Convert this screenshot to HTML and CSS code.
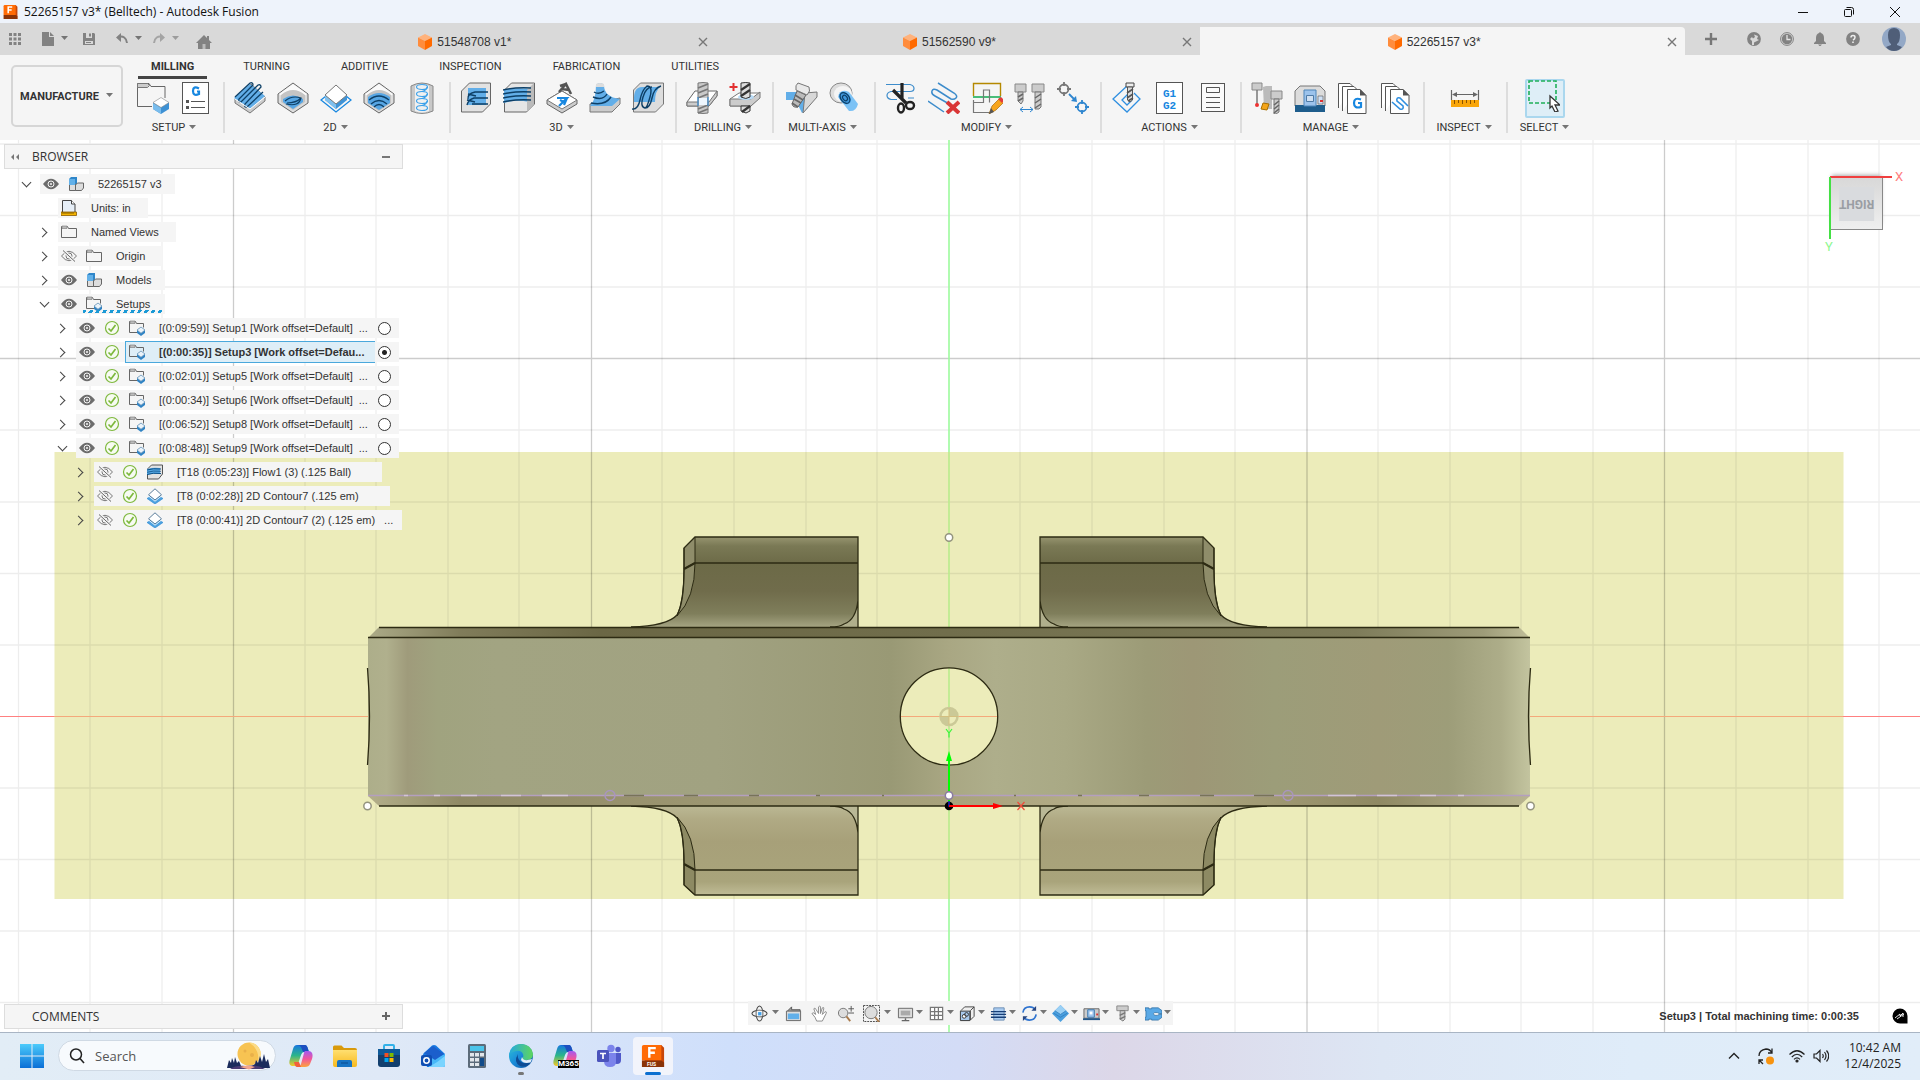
FILE: index.html
```html
<!DOCTYPE html>
<html lang="en">
<head>
<meta charset="utf-8">
<title>52265157 v3* (Belltech) - Autodesk Fusion</title>
<link rel="stylesheet" href="styles.css">
</head>
<body>
<svg class="defs" aria-hidden="true">
  <defs>
    <linearGradient id="gBlue" x2="0" y2="1"><stop offset="0" stop-color="#4ccbfb"/><stop offset="1" stop-color="#0a6fd6"/></linearGradient>
    <linearGradient id="gCopB" x2="0" y2="1"><stop offset="0" stop-color="#a35af0"/><stop offset=".5" stop-color="#f2569a"/><stop offset="1" stop-color="#fca43c"/></linearGradient>
    <linearGradient id="gCopC" x2="0" y2="1"><stop offset="0" stop-color="#1777e0"/><stop offset=".5" stop-color="#2bb58a"/><stop offset="1" stop-color="#f6c928"/></linearGradient>
    <linearGradient id="gEdge" x2="1" y2="1"><stop offset="0" stop-color="#2cc3d8"/><stop offset=".5" stop-color="#1a8ad8"/><stop offset="1" stop-color="#0d4f9e"/></linearGradient>
    <linearGradient id="gEdgeTop"><stop offset="0" stop-color="#25a8e0"/><stop offset="1" stop-color="#5fd65c"/></linearGradient>
    <linearGradient id="gFolder" x2="0" y2="1"><stop offset="0" stop-color="#ffdf70"/><stop offset="1" stop-color="#f7b91e"/></linearGradient>
  </defs>
  <symbol id="caret" viewBox="0 0 8 6"><path d="M0 0H7L3.500 4z" fill="#757575"/></symbol>
  <symbol id="cube" viewBox="0 0 14 16"><path d="M7 0l7 3.500L7 7 0 3.500z" fill="#ffb27c"/><path d="M0 3.500L7 7v9l-7-4z" fill="#ff8c3c"/><path d="M14 3.500L7 7v9l7-4z" fill="#ff6a00"/></symbol>
  <symbol id="fusion" viewBox="0 0 26 26"><path d="M4 1h18l3 3v21H4z" fill="#c8470a"/><path d="M1 3q0-2 2-2h19v17H1z" fill="#ff6b06"/><path d="M1 18h21l3 2v5H1z" fill="#8a3308"/><path d="M9 15V4.500h7M9 9.500h6" stroke="#fff" stroke-width="2.600" fill="none"/></symbol>
  <symbol id="eye" viewBox="0 0 16 16"><path d="M0 8Q8-2.500 16 8 8 18.500 0 8z" fill="#6c6c6c"/><circle cx="8" cy="8" r="3" fill="#6c6c6c" stroke="#f5f5f5"/><circle cx="8" cy="8" r="1" fill="#f5f5f5"/></symbol>
  <symbol id="eyeoff" viewBox="0 0 16 16"><path d="M.5 8Q8-1.500 15.500 8 8 17.500.5 8z" fill="none" stroke="#777"/><circle cx="8" cy="8" r="3" fill="none" stroke="#777"/><circle cx="8" cy="8" r="1" fill="#777"/><path d="M2.500 2.500l11 11" stroke="#f5f5f5" stroke-width="3"/><path d="M2 2.500l12 11" stroke="#666"/></symbol>
  <symbol id="ok" viewBox="0 0 16 16"><circle cx="8" cy="8" r="6.500" fill="#f7fbf2" stroke="#7db83c" stroke-width="1.200"/><path d="M4.500 8.500L7 11l4.500-6" fill="none" stroke="#7db83c" stroke-width="1.700"/></symbol>
  <symbol id="folder" viewBox="0 0 16 16"><path d="M.5 2.500h6l1 2h8v9H.5z" fill="#f5f5f5" stroke="#666"/><path d="M1 2h5v2.500H1z" fill="#bbb" stroke="#777" stroke-width=".6"/></symbol>
  <symbol id="setupf" viewBox="0 0 16 16"><path d="M8 12.500H.5V1.500h6l1 2h7v4" fill="none" stroke="#666"/><path d="M1 1h5v2.500H1z" fill="#bbb" stroke="#777" stroke-width=".6"/><path d="M12 7l4 3v3l-4 3-4-3v-3z" fill="#2f83c4"/><path d="M12 7l4 3-4 3.200L8 10z" fill="#eaf3fa" stroke="#6f95b4" stroke-width=".7"/></symbol>
  <symbol id="comp" viewBox="0 0 16 16"><path d="M1 3l2-2h6v7l-2 2H1z" fill="#2f86c9"/><path d="M1 3h6v7H1z" fill="#62b0e8"/><path d="M1.500 8.500h6v6h-6zM7.500 9l2-2h6v5l-2 2.500h-6z" fill="#ddd" stroke="#666"/><path d="M1 3h6v6H1z" fill="#62b0e8"/></symbol>
  <symbol id="units" viewBox="0 0 16 16"><path d="M1.500 12V.5h9l3.500 3.500v8" fill="#e6eef7" stroke="#444"/><path d="M10.500.5V4H14" fill="#fff" stroke="#444"/><path d="M0 12h15.500v3.500H0z" fill="#f4b400" stroke="#8a5a00" stroke-width=".8"/><path d="M2 12v2m2-2v2m2-2v2m2-2v2m2-2v2m2-2v2" stroke="#6b4800" stroke-width=".8"/></symbol>
  <symbol id="flow" viewBox="0 0 16 16"><path d="M.5 5l4-4h11v9l-4 5H.5z" fill="#e2e2e2" stroke="#555"/><path d="M0 5q6-2 13-1v6q-7-1-13 1z" fill="#57a9e4"/><path d="M0 6q6-2 14-1M0 10.500q6-2 14-1" stroke="#0c4f85" fill="none"/><path d="M0 8.300q6-2 14-1" stroke="#0c4f85" fill="none" stroke-width=".8"/></symbol>
  <symbol id="contour" viewBox="0 0 16 16"><path d="M8 6l8 4.500L8 16 0 10.500z" fill="#4ea2e0" stroke="#2386d2" stroke-width=".6"/><path d="M8 .8l6.500 6L8 12 1.500 6.800z" fill="#fff" stroke="#4a6f90" stroke-width=".9"/><path d="M1.500 8L8 13.200 14.500 8" fill="none" stroke="#dff0fc" stroke-width="1"/></symbol>
</svg>

<div class="app">
  <header class="title">
    <svg class="logo" viewBox="0 0 26 26"><use href="#fusion"/></svg>
    <h1>52265157 v3* (Belltech) - Autodesk Fusion</h1>
    <div class="winbtns">
      <button aria-label="Minimize"><svg viewBox="0 0 12 12"><path d="M1 6.500h10" stroke="#111"/></svg></button>
      <button aria-label="Restore"><svg viewBox="0 0 12 12" fill="none" stroke="#111"><rect x="1.500" y="3.500" width="7" height="7" rx="1"/><path d="M3.500 1.500h5q2 0 2 2v5"/></svg></button>
      <button aria-label="Close"><svg viewBox="0 0 12 12"><path d="M1 1l10 10M11 1L1 11" stroke="#111"/></svg></button>
    </div>
  </header>

  <div class="docbar">
    <div class="quick">
      <button aria-label="Data panel"><svg viewBox="0 0 16 16" width="16" height="16" fill="#828282"><path d="M2 2h3v3H2zM6.500 2h3v3h-3zM11 2h3v3h-3zM2 6.500h3v3H2zM6.500 6.500h3v3h-3zM11 6.500h3v3h-3zM2 11h3v3H2zM6.500 11h3v3h-3zM11 11h3v3h-3z"/></svg></button>
      <button aria-label="File" class="q2"><svg viewBox="0 0 16 16" width="16" height="16" fill="#828282"><path d="M2 1h7v5h5v9H2zM10 1l4 4h-4z"/></svg><svg class="car"><use href="#caret"/></svg></button>
      <button aria-label="Save" class="q3"><svg viewBox="0 0 16 16" width="16" height="16"><path d="M2 2h11l1 1v11H2z" fill="#828282"/><path d="M5 2h6v5H5zM4 10h8v3H4z" fill="#d9d9d9"/><path d="M8 2.500h2v3H8zM5 11h5v1H5z" fill="#828282"/></svg></button>
      <button aria-label="Undo" class="q2"><svg viewBox="0 0 16 16" width="16" height="16"><path d="M4 6q8-2 9 6" fill="none" stroke="#828282" stroke-width="2"/><path d="M2 6.500L7 2v9z" fill="#828282"/></svg><svg class="car"><use href="#caret"/></svg></button>
      <button aria-label="Redo" class="q2 dim"><svg viewBox="0 0 16 16" width="16" height="16"><path d="M12 6Q4 4 3 12" fill="none" stroke="#828282" stroke-width="2"/><path d="M14 6.500L9 2v9z" fill="#828282"/></svg><svg class="car"><use href="#caret"/></svg></button>
      <button aria-label="Home" class="q4"><svg viewBox="0 0 16 16" width="16" height="16"><path d="M8 1L0 9h2v6h12V9h2l-3-3V2h-2v2z" fill="#828282"/><path d="M6.500 10h3v5h-3z" fill="#bbb"/></svg></button>
    </div>
    <nav class="docs">
      <div class="doc"><button class="name"><svg><use href="#cube"/></svg>51548708 v1*</button><button class="x" aria-label="Close tab"><svg viewBox="0 0 10 10"><path d="M1 1l8 8M9 1L1 9" stroke="#777" stroke-width="1.400"/></svg></button></div>
      <div class="doc"><button class="name"><svg><use href="#cube"/></svg>51562590 v9*</button><button class="x" aria-label="Close tab"><svg viewBox="0 0 10 10"><path d="M1 1l8 8M9 1L1 9" stroke="#777" stroke-width="1.400"/></svg></button></div>
      <div class="doc on"><button class="name"><svg><use href="#cube"/></svg>52265157 v3*</button><button class="x" aria-label="Close tab"><svg viewBox="0 0 10 10"><path d="M1 1l8 8M9 1L1 9" stroke="#777" stroke-width="1.400"/></svg></button></div>
    </nav>
    <div class="tools">
      <button aria-label="New tab"><svg viewBox="0 0 14 14"><path d="M7 1v12M1 7h12" stroke="#777" stroke-width="2.400"/></svg></button>
      <button aria-label="Extensions"><svg viewBox="0 0 14 14"><circle cx="7" cy="7" r="6.900" fill="#828282"/><path d="M5 13V9L3 7l2-2 1 1.500L8 5 7 2.500l4 1.500-1 3 2 1-3 1.500-2 1V13z" fill="#d9d9d9"/></svg></button>
      <button aria-label="Job status"><svg viewBox="0 0 14 14"><circle cx="7" cy="7" r="6.400" fill="none" stroke="#828282"/><circle cx="7" cy="7" r="5.200" fill="#828282"/><path d="M7 3v4.500h3.500" stroke="#e4e4e4" stroke-width="1.300" fill="none"/></svg></button>
      <button aria-label="Notifications"><svg viewBox="0 0 14 14" fill="#828282"><path d="M7 0l1 1q3 1 3 5v3l2 2v1H1v-1l2-2V6q0-4 3-5zM5 12.500h4L7 14.500z"/></svg></button>
      <button aria-label="Help"><svg viewBox="0 0 14 14"><circle cx="7" cy="7" r="6.900" fill="#828282"/><path d="M5 5.500q0-2 2-2t2 1.700T7 8" fill="none" stroke="#eee" stroke-width="1.500"/><path d="M6.200 9.500h1.600V11H6.200z" fill="#eee"/></svg></button>
      <button aria-label="Account" class="acct"><svg viewBox="0 0 24 24"><circle cx="12" cy="12" r="12" fill="#93a8c6"/><path d="M6 8q0-7 6-7t6 7-3 9v1l5 2q-3 4-8 4t-8-4l5-2v-1Q6 15 6 8z" fill="#4f5e78"/></svg></button>
    </div>
  </div>

  <div class="ribbon">
    <button class="workspace">MANUFACTURE <svg class="car"><use href="#caret"/></svg></button>
    <div class="panel">
      <nav class="tabs">
        <button class="on">MILLING</button><button>TURNING</button><button>ADDITIVE</button><button>INSPECTION</button><button>FABRICATION</button><button>UTILITIES</button>
      </nav>
      <div class="groups">
        <section class="group">
          <div class="icons">
            <button aria-label="New setup"><svg viewBox="0 0 32 32"><path d="M15 24.500H.5V1.500H12l2 3h14V16" fill="none" stroke="#666"/><path d="M.5 1.500h10l2 2-2 2H.5z" fill="#ccc" stroke="#777"/><path d="M24 16l8 5v6l-8 5-8-5v-6z" fill="#3e91d4"/><path d="M16 21l8 5v6l-8-5z" fill="#79bcec"/><path d="M24 15.500l8 5-8 5-8-5z" fill="#fff" stroke="#888" stroke-width=".6"/></svg></button>
            <button aria-label="NC program"><svg viewBox="0 0 32 32"><rect x="2.500" y=".5" width="26" height="31" fill="#fff" stroke="#555"/><path d="M19 6.500q-6-3-6 2.500t6 3V9.500h-2" fill="none" stroke="#1787e0" stroke-width="2.200"/><path d="M6 18h3v3H6zM6 24h3v3H6z" fill="#555"/><path d="M11 19.500h14M11 25.500h14" stroke="#555" stroke-width="1.200"/></svg></button>
          </div>
          <button class="lab">SETUP <svg class="car"><use href="#caret"/></svg></button>
        </section>
        <section class="group">
          <div class="icons">
            <button aria-label="Face"><svg viewBox="0 0 32 32"><path d="M1 17L17 2l14 13v4L16 31 1 21z" fill="#ccc" stroke="#777"/><path d="M0 16L16 2l15 12-15 13z" fill="#62aee8"/><path d="M1 15L16 1q3-1 3 2L5 17q-1 4 2 3L24 3q3-1 3 2L11 22q-1 4 2 3L29 10" fill="none" stroke="#0d3f66" stroke-width="1.300"/><path d="M1 17l15 10 15-12" fill="none" stroke="#fff"/></svg></button>
            <button aria-label="2D adaptive"><svg viewBox="0 0 32 32"><path d="M16 1l15 11v9L16 31 1 21v-9z" fill="#ddd" stroke="#666"/><path d="M16 2l14 10-14 11L2 12z" fill="#fafafa"/><path d="M4 13q12-10 24 0v7l-12 8-12-8z" fill="#c4c4c4"/><path d="M6 17q10-7 20 0v3l-10 7-10-7z" fill="#57a6e4"/><path d="M8 19q7-6 16-3-2 9-15 6M10 21q9 0 14-5" fill="none" stroke="#0d3f66" stroke-width="1.200"/></svg></button>
            <button aria-label="2D contour"><svg viewBox="0 0 32 32"><path d="M16 6l15 12-15 12L1 18z" fill="none" stroke="#1787e0" stroke-width="1.300"/><path d="M5 13l11 9 11-9v5l-11 9-11-9z" fill="#3f93d6"/><path d="M5 13l11 9v5L5 18z" fill="#7fc0ee"/><path d="M16 3l11 10-11 9L5 13z" fill="#fff" stroke="#777"/></svg></button>
            <button aria-label="2D pocket"><svg viewBox="0 0 32 32"><path d="M16 1l15 11v9L16 31 1 21v-9z" fill="#ddd" stroke="#666"/><path d="M16 2l14 10-14 11L2 12z" fill="#fafafa"/><path d="M4 13q12-10 24 0v8l-12 8-12-8z" fill="#c4c4c4"/><path d="M5 15q11-8 22 0v6l-11 7-11-7z" fill="#57a6e4"/><path d="M6 18q10-8 20 0M8 22q8-7 16 0M11 25q5-5 10 0" fill="none" stroke="#0d3f66" stroke-width="1.300"/></svg></button>
            <button aria-label="Bore"><svg viewBox="0 0 32 32"><path d="M5 4q11-6 22 0v25q-11 5-22 0z" fill="#c8c8c8" stroke="#888"/><path d="M9 4q7-4 14 0v25q-7 3-14 0z" fill="#f0f0f0"/><g fill="none" stroke="#3aa0ea" stroke-width="1.200"><ellipse cx="16" cy="5" rx="5.500" ry="2.500"/><ellipse cx="16" cy="12" rx="5.500" ry="2.500"/><ellipse cx="16" cy="19" rx="5.500" ry="2.500"/><ellipse cx="16" cy="26" rx="5.500" ry="2.500"/><path d="M21 5q0 3-5 4.500M21 12q0 3-5 4.500M21 19q0 3-5 4.500"/></g></svg></button>
          </div>
          <button class="lab">2D <svg class="car"><use href="#caret"/></svg></button>
        </section>
        <section class="group">
          <div class="icons">
            <button aria-label="Adaptive clearing"><svg viewBox="0 0 32 32"><path d="M1.500 30V9l8-8h21v21l-8 8z" fill="#e2e2e2" stroke="#666"/><path d="M8 6h18v17H8z" fill="#62aee8"/><path d="M28 10H15q-8 2-7 7M28 16H14q-6 2-7 7M28 22H12M8 12l8 2M7 18l8 2" stroke="#0d3f66" stroke-width="1.400" fill="none"/></svg></button>
            <button aria-label="Parallel"><svg viewBox="0 0 32 32"><path d="M1.500 30V8l7-7h23v21l-8 8z" fill="#e6e6e6" stroke="#666"/><path d="M1 8q12-3 25-1v13q-13-3-25 1z" fill="#62aee8"/><path d="M24 8l7-7v21l-7 8z" fill="#bbb"/><path d="M0 8q13-3 28-2M0 12q13-3 28-2M0 16q13-3 28-2M0 20q13-3 28-2" stroke="#0d3f66" stroke-width="1.400" fill="none"/></svg></button>
            <button aria-label="Trace"><svg viewBox="0 0 32 32"><path d="M16 9l15 9v4l-15 9-15-9v-4z" fill="#ccc" stroke="#666"/><path d="M16 9l15 9-15 9-15-9z" fill="#fff" stroke="#777"/><path d="M13 10l7-8 5 10M20 2l-6 2M16 7l7 1" stroke="#555" stroke-width="2.600" fill="none"/><path d="M11 16l10 0-8 8M21 16l-3 7M14 18l6 3" stroke="#1787e0" stroke-width="2.200" fill="none"/></svg></button>
            <button aria-label="Contour"><svg viewBox="0 0 32 32"><path d="M1 22v8h22l8-8v-6z" fill="#ccc" stroke="#777"/><path d="M7 3q4-4 8 0 0 12 16 14l-8 7H1Q7 18 7 3z" fill="#62aee8"/><path d="M7 2q4-2 8 0v3H7z" fill="#ddd"/><path d="M5 10q5 3 10-1M4 15q10 4 14-3M2 21q14 3 20-6" stroke="#0d3f66" stroke-width="1.400" fill="none"/></svg></button>
            <button aria-label="Scallop"><svg viewBox="0 0 32 32"><path d="M1.500 30V8l7-7h23v21l-8 8z" fill="#ddd" stroke="#777"/><path d="M2 20q-1-15 8-15h18q-5 4-5 15z" fill="#62aee8"/><path d="M0 27q6 1 8-9T15 4q6 0 3 11t-5 11q-5-1-2-11T20 5M13 26q5 0 7-10t9-12" stroke="#0d3f66" stroke-width="1.400" fill="none"/></svg></button>
          </div>
          <button class="lab">3D <svg class="car"><use href="#caret"/></svg></button>
        </section>
        <section class="group">
          <div class="icons">
            <button aria-label="Drill"><svg viewBox="0 0 32 32"><path d="M1 20L9 9h22v5l-8 10H1z" fill="#fff" stroke="#666"/><path d="M1 20h22l8-11v5l-8 10H1z" fill="#ccc" stroke="#777"/><path d="M12 1q5-1 10 0v30q-5 1-10 0z" fill="#c9c9c9" stroke="#777"/><path d="M12 6l10-4M12 11l10-4M12 16l10-4M12 27l10-4M12 31l10-4" stroke="#777" stroke-width="1.800"/><path d="M12 15v9M22 15v9" stroke="#2f8fe0"/><path d="M13 16h8v7h-8z" fill="#eef6fd"/></svg></button>
            <button aria-label="Hole recognition"><svg viewBox="0 0 32 32"><path d="M1 17l9-6h20v5l-8 8H1z" fill="#fff" stroke="#777"/><path d="M1 17h21l9-7v6l-9 8H1z" fill="#ccc" stroke="#777"/><ellipse cx="17" cy="15" rx="8" ry="3" fill="#b9dbf6"/><path d="M12 1q5-1 9 0v14q-4 3-9 0zM12 24h9v5l-4 2-5-2z" fill="#ddd" stroke="#333"/><path d="M12 8l9-6M12 14l9-6M13 30l8-6" stroke="#333" stroke-width="2.200"/><path d="M4.500 1v8M.5 5h8" stroke="#e23030" stroke-width="2"/></svg></button>
          </div>
          <button class="lab">DRILLING <svg class="car"><use href="#caret"/></svg></button>
        </section>
        <section class="group multi">
          <div class="icons">
            <button aria-label="Swarf"><svg viewBox="0 0 32 32"><path d="M0 10h13v8H0zM10 19l12-9v16l-6 5z" fill="#62aee8"/><path d="M17 31l14-16v-5l-12 1z" fill="#d8d8d8" stroke="#777"/><path d="M11 9l9 4-8 12q-5 1-6-3z" fill="#bbb" stroke="#666"/><path d="M9 13l8 5M8 17l7 4M6 21l6 4" stroke="#666" stroke-width="1.600"/><path d="M12 1l11 4q2 4-2 8L10 8q-1-5 2-7z" fill="#e9e9e9" stroke="#777"/></svg></button>
            <button aria-label="Rotary"><svg viewBox="0 0 32 32"><ellipse cx="12" cy="11" rx="11" ry="10" fill="#ddd" stroke="#888"/><ellipse cx="14" cy="12" rx="9" ry="8" fill="#f4f4f4"/><path d="M9 15q2-9 11-5l9 12q-2 8-9 7z" fill="#7cc2f5"/><ellipse cx="16" cy="16" rx="7" ry="5" transform="rotate(50 16 16)" fill="#3f97dc"/><ellipse cx="16" cy="16" rx="6" ry="4" transform="rotate(50 16 16)" fill="none" stroke="#0d3f66" stroke-width="1.200"/><ellipse cx="16" cy="16" rx="3" ry="2" transform="rotate(50 16 16)" fill="none" stroke="#0d3f66" stroke-width="1.200"/></svg></button>
          </div>
          <button class="lab">MULTI-AXIS <svg class="car"><use href="#caret"/></svg></button>
        </section>
        <section class="group">
          <div class="icons">
            <button aria-label="Trim"><svg viewBox="0 0 32 32"><path d="M1 2.500h24q4 1 4 4t-4 3H6q-4 1-4 4t4 4h6M23 16h6" fill="none" stroke="#3d8ccb" stroke-width="1.200"/><path d="M17 1v16M8 8l13 13" stroke="#222" stroke-width="3.200"/><ellipse cx="16" cy="26" rx="3" ry="4.500" fill="none" stroke="#222" stroke-width="2.400"/><ellipse cx="25" cy="23.500" rx="4" ry="3.500" fill="none" stroke="#222" stroke-width="2.400"/></svg></button>
            <button aria-label="Delete passes"><svg viewBox="0 0 32 32"><path d="M10 1l16 10q4 3 2 5t-5 1L9 8Q5 6 4 9t3 5l16 9M0 19l16 11" fill="none" stroke="#3d8ccb" stroke-width="1.500"/><path d="M19 20l12 11M31 20L19 31" stroke="#d93636" stroke-width="4"/></svg></button>
            <button aria-label="Edit"><svg viewBox="0 0 32 32"><path d="M2.500 14V1.500h27V14" fill="none" stroke="#b58900" stroke-width="1.400"/><path d="M2 15h28" stroke="#1fb05a" stroke-width="1.600"/><path d="M2.500 18v12.500h18M2.500 20.500h10V8h6v12.500" fill="none" stroke="#777" stroke-width="1.200"/><path d="M18 32l3-8 8-8 4 4-8 8z" fill="#f7a51d" stroke="#a86b10" stroke-width=".7"/><path d="M27 17l3-2 3 3-2 3z" fill="#e23c3c"/><path d="M18 32l2-6 3 4z" fill="#555"/></svg></button>
            <button aria-label="Replace tool"><svg viewBox="0 0 32 32"><path d="M1 2h11v8H1zM18 2h12v8H18z" fill="#ccc" stroke="#888"/><path d="M4 10h5v9l-2 3-3-3zM21 10h6v15l-2 2h-4z" fill="#ccc" stroke="#777"/><path d="M4 15l5-3M4 19l5-3M21 16l6-4M21 21l6-4M21 26l6-4" stroke="#666" stroke-width="1.500"/><path d="M6 27.500h13M9 25l-3 2.500L9 30M16 25l3 2.500-3 2.500" fill="none" stroke="#2f86cf"/></svg></button>
            <button aria-label="Move points"><svg viewBox="0 0 32 32"><circle cx="7" cy="7" r="4.500" fill="none" stroke="#777" stroke-width="1.800"/><path d="M7 0v4M7 10v4M0 7h4M10 7h4" stroke="#777" stroke-width="1.800"/><path d="M12 12l6 6" stroke="#2f86cf" stroke-width="1.800"/><path d="M20 20l-6-1 5-5z" fill="#2f86cf"/><circle cx="25" cy="25" r="4.500" fill="none" stroke="#2f86cf" stroke-width="1.800"/><path d="M25 18v4M25 28v4M18 25h4M28 25h4" stroke="#2f86cf" stroke-width="1.800"/></svg></button>
          </div>
          <button class="lab">MODIFY <svg class="car"><use href="#caret"/></svg></button>
        </section>
        <section class="group">
          <div class="icons">
            <button aria-label="Simulate"><svg viewBox="0 0 32 32"><path d="M16 4L2 17l14 13 13-13-6-6M17 12l-6 6 5 5 5-5" fill="none" stroke="#2f8fe0" stroke-width="1.300"/><path d="M15 1h8v4h-8z" fill="#eee" stroke="#444"/><path d="M16.500 5h5v13l-2.500 2-2.500-2z" fill="#ddd" stroke="#555"/><path d="M16 11l6-4M16 16l6-4M17 19l5-3" stroke="#555" stroke-width="1.600"/></svg></button>
            <button aria-label="Post process"><svg viewBox="0 0 32 32"><rect x="2.500" y=".5" width="26" height="31" fill="#fff" stroke="#555"/><text x="15.500" y="15" class="g12">G1</text><text x="15.500" y="27" class="g12">G2</text></svg></button>
            <button aria-label="Setup sheet"><svg viewBox="0 0 32 32"><rect x="4.500" y="1.500" width="23" height="28" fill="#fafafa" stroke="#555"/><path d="M9.500 5.500h13v5h-13zM9 15.500h14M9 20.500h14M9 25.500h14" fill="none" stroke="#555"/></svg></button>
          </div>
          <button class="lab">ACTIONS <svg class="car"><use href="#caret"/></svg></button>
        </section>
        <section class="group">
          <div class="icons">
            <button aria-label="Tool library"><svg viewBox="0 0 32 32"><path d="M1 1h10v7H1z" fill="#ccc" stroke="#888"/><path d="M6 8v14" stroke="#777" stroke-width="1.500"/><circle cx="6" cy="23" r="2" fill="#e33"/><path d="M12 5l3-1h6v23h-8z" fill="#bbb"/><path d="M12 21l6 1-2 6-6-1z" fill="#f4a51a" stroke="#a97000"/><path d="M20 9h11v8H20z" fill="#ccc" stroke="#888"/><path d="M23 17h5v13l-3 2h-2z" fill="#ccc" stroke="#777"/><path d="M23 23l5-4M23 27l5-4M23 31l5-4" stroke="#666" stroke-width="1.600"/></svg></button>
            <button aria-label="Machine library"><svg viewBox="0 0 32 32"><path d="M1 9l5-5h20l5 5v15H1z" fill="#dcdcdc" stroke="#777"/><path d="M1 23h30v7H1z" fill="#1e5d8c"/><path d="M10 8h12v16H10z" fill="#9cc3ec" stroke="#4f86b9"/><path d="M12.500 13.500h7v6h-7z" fill="#cfe0f2" stroke="#4f7ba6"/><path d="M24 14h5v8h-5z" fill="#cfe0f5" stroke="#555" stroke-width=".6"/><path d="M26 18h3v2h-3z" fill="#d33"/></svg></button>
            <button aria-label="Post library"><svg viewBox="0 0 32 32"><path d="M1.500 26V1.500H13l3 3M5.500 29V4.500H17l3 3M10.500 31.500v-24H23l6 6v18z" fill="#fff" stroke="#555"/><path d="M23 7l6.500 6.500H23z" fill="#555"/><path d="M24 17.500q-7-2.500-7 3.500t7 4V21h-3" fill="none" stroke="#1787e0" stroke-width="2.200"/></svg></button>
            <button aria-label="Template library"><svg viewBox="0 0 32 32"><path d="M1.500 26V1.500H13l3 3M5.500 29V4.500H17l3 3M10.500 31.500v-24H23l6 6v18z" fill="#fff" stroke="#555"/><path d="M23 7l6.500 6.500H23z" fill="#555"/><path d="M12 20l8 7q4 1 3-3l-6-5q-1-4 3-3l8 8" fill="none" stroke="#2f8fe0" stroke-width="1.600"/></svg></button>
          </div>
          <button class="lab">MANAGE <svg class="car"><use href="#caret"/></svg></button>
        </section>
        <section class="group insp">
          <div class="icons"><button aria-label="Measure"><svg viewBox="0 0 32 32"><path d="M2.500 8v10M29.500 8v10M4 12.500h24" stroke="#666" stroke-width="1.200"/><path d="M3 12.500l5-2.500v5zM29 12.500L24 10v5z" fill="#666"/><path d="M2 18h28v7H2z" fill="#f9a60a"/><path d="M5.500 18v4m4-4v3m4-3v4m4-4v3m4-3v4m4-4v3" stroke="#8a5200"/></svg></button></div>
          <button class="lab">INSPECT <svg class="car"><use href="#caret"/></svg></button>
        </section>
        <section class="group sel">
          <div class="icons"><button aria-label="Select" class="active"><svg viewBox="0 0 32 32"><path d="M1 1h27v22H1z" fill="none" stroke="#1fb05a" stroke-width="1.600" stroke-dasharray="4 2"/><path d="M22 16l10 9h-5l3 6-3 1-3-6-2 2z" fill="#fff" stroke="#333" stroke-width="1.300"/></svg></button></div>
          <button class="lab">SELECT <svg class="car"><use href="#caret"/></svg></button>
        </section>
      </div>
    </div>
  </div>

  <main class="canvas">
    <svg class="scene" viewBox="0 140 1920 892" preserveAspectRatio="xMidYMid slice">
      <defs>
        <linearGradient id="body"><stop offset="0" stop-color="#adae8a"/><stop offset=".016" stop-color="#b0b08d"/><stop offset=".034" stop-color="#9f9b7b"/><stop offset=".06" stop-color="#a0a37f"/><stop offset=".11" stop-color="#a2a482"/><stop offset=".3" stop-color="#a1a281"/><stop offset=".45" stop-color="#999975"/><stop offset=".5" stop-color="#a9a783"/><stop offset=".54" stop-color="#aeae8b"/><stop offset=".6" stop-color="#a9a985"/><stop offset=".67" stop-color="#9c9b77"/><stop offset=".71" stop-color="#9d9776"/><stop offset=".78" stop-color="#9c9d79"/><stop offset=".87" stop-color="#9f9b78"/><stop offset=".93" stop-color="#9d9d79"/><stop offset=".975" stop-color="#adad89"/><stop offset="1" stop-color="#c3c49f"/></linearGradient>
        <linearGradient id="topc"><stop offset="0" stop-color="#acab88"/><stop offset=".08" stop-color="#807c5a"/><stop offset=".2" stop-color="#6b6745"/><stop offset=".5" stop-color="#716e4c"/><stop offset=".85" stop-color="#7e7c5a"/><stop offset=".96" stop-color="#9e9c79"/><stop offset="1" stop-color="#c0be99"/></linearGradient>
        <linearGradient id="botc"><stop offset="0" stop-color="#b3af8a"/><stop offset=".08" stop-color="#908a66"/><stop offset=".5" stop-color="#a8a27c"/><stop offset=".65" stop-color="#b6af89"/><stop offset=".87" stop-color="#8f8963"/><stop offset="1" stop-color="#b9b591"/></linearGradient>
        <linearGradient id="lugT" x2="0" y2="1"><stop offset="0" stop-color="#96946f"/><stop offset=".1" stop-color="#7a7955"/><stop offset=".3" stop-color="#6c6a47"/><stop offset=".6" stop-color="#706c4b"/><stop offset=".85" stop-color="#7f7e5b"/><stop offset="1" stop-color="#a5a482"/></linearGradient>
        <linearGradient id="lugB" x2="0" y2="1"><stop offset="0" stop-color="#bbb894"/><stop offset=".15" stop-color="#b0aa84"/><stop offset=".4" stop-color="#a7a079"/><stop offset=".85" stop-color="#a9a47b"/><stop offset="1" stop-color="#c0bc96"/></linearGradient>
        <g id="lugTop">
          <path d="M631 627Q667 626 677 615 684 603 684 569V548L695 537H858V627z" fill="url(#lugT)"/>
          <path d="M684 548L695 537V563Q695 598 677 616 684 600 684 569z" fill="#8f8d6a" stroke="#2d2b13"/>
          <path d="M858 600Q856 620 842 625L830 627H858z" fill="#b0af8c"/>
          <path d="M684 569L695 563H858M631 627Q667 626 677 615 684 603 684 569V548L695 537H858V627M858 600Q856 620 844 624 840 627 830 627" fill="none" stroke="#2d2b13" stroke-width="1.300"/>
          <path d="M684 569l11-6" stroke="#2d2b13" stroke-width="2"/>
        </g>
        <g id="lugBot">
          <path d="M631 806Q667 807 677 818 684 830 684 864V885L695 895H858V806z" fill="url(#lugB)"/>
          <path d="M684 885L695 895V870Q695 835 677 817 684 833 684 864z" fill="#8d8a63" stroke="#2d2b13"/>
          <path d="M858 833Q856 813 842 808L830 806H858z" fill="#b9b896"/>
          <path d="M684 864L695 870H858M631 806Q667 807 677 818 684 830 684 864V885L695 895H858V806M858 833Q856 813 844 809 840 806 830 806" fill="none" stroke="#2d2b13" stroke-width="1.300"/>
          <path d="M684 864l11 6" stroke="#2d2b13" stroke-width="2"/>
        </g>
      </defs>
      <rect y="140" width="1920" height="892" fill="#fff"/>
      <rect x="54.500" y="452" width="1789" height="447" fill="#ececba"/>
      <path class="minor" d="M18.500 140v892M90 140v892M162 140v892M305 140v892M376 140v892M448 140v892M519 140v892M662 140v892M734 140v892M806 140v892M877 140v892M1020 140v892M1092 140v892M1164 140v892M1235 140v892M1378 140v892M1450 140v892M1521 140v892M1593 140v892M1736 140v892M1808 140v892M1879 140v892M0 144h1920M0 215.500h1920M0 287h1920M0 430h1920M0 502h1920M0 573.500h1920M0 645h1920M0 788h1920M0 859.500h1920M0 931h1920M0 1002.500h1920"/>
      <path class="major" d="M233.500 140v892M591.500 140v892M1307 140v892M1664.500 140v892M0 358.500h1920"/>
      <path d="M0 716.500h54M1843 716.500h77" stroke="#ff8080" stroke-width="1.200"/>
      <path d="M54 716.500h1789" stroke="#f4a97b" stroke-width="1.200"/>
      <path d="M949 140v312M949 899v133" stroke="#9dfb9d" stroke-width="1.600"/>
      <path d="M949 452v447" stroke="#b9ec8c" stroke-width="1.600"/>
      <use href="#lugTop"/><use href="#lugTop" transform="translate(1898) scale(-1 1)"/>
      <use href="#lugBot"/><use href="#lugBot" transform="translate(1898) scale(-1 1)"/>
      <path d="M368 638H1530V796H368zM949 668a49 49 0 1 0 .1 0z" fill="url(#body)" fill-rule="evenodd"/>
      <path d="M379 627H1519L1530 638H368z" fill="url(#topc)"/>
      <path d="M368 796H1530L1519 806H379z" fill="url(#botc)"/>
      <path d="M379 627.500H1519M368 637.500H1530M379 806H1519" stroke="#2d2b13" stroke-width="1.600"/>
      <circle cx="949" cy="716.500" r="48.700" fill="none" stroke="#2d2b13" stroke-width="1.300"/>
      <path d="M367.500 668q4 48 0 97M1530.500 668q-4 48 0 97" fill="none" stroke="#2d2b13" stroke-width="1.300"/>
      <path d="M368 795.500H1530" stroke="#b49fbf" stroke-width="1.500"/>
      <path d="M624 795.500h20M684 795.500h14M749 795.500h10M816 795.500h4M882 795.500h2M1014 795.500h2M1078 795.500h4M1139 795.500h10M1200 795.500h14M1254 795.500h20" stroke="#77735a" stroke-width="1.500"/>
      <path d="M404 795.500h4M434 795.500h6M461 795.500h16M501 795.500h20M542 795.500h26M1328 795.500h28M1377 795.500h20M1420 795.500h16M1458 795.500h6" stroke="#d2c4d8" stroke-width="1.500"/>
      <g fill="none" stroke="#a995bd" stroke-width="1.400"><circle cx="610" cy="795.500" r="5"/><circle cx="1288" cy="795.500" r="5"/></g>
      <circle cx="949" cy="716.500" r="8.500" fill="#ececba" stroke="#cbc997" stroke-width="2.500"/><path d="M949 708v17a8.500 8.500 0 0 1-8.500-8.500h17A8.500 8.500 0 0 0 949 708z" fill="#cbc997"/><path d="M949 708v17M940 716.500h18" stroke="#d3bf80"/>
      <path d="M949 806V756" stroke="#0f0" stroke-width="2"/><path d="M949 751l3 10h-6z" fill="#0f0"/>
      <circle cx="949" cy="806" r="4.300" fill="#000"/><path d="M949 801v5h4" stroke="#2020c0" stroke-width="1.500" fill="none"/>
      <path d="M949 806h48" stroke="#f00" stroke-width="2"/><path d="M1003 806l-10-3v6z" fill="#f00"/>
      <g fill="#fff" stroke="#94947e" stroke-width="1.500"><circle cx="949" cy="537.500" r="3.700"/><circle cx="367.500" cy="806" r="3.700"/><circle cx="1530.500" cy="806" r="3.700"/></g>
      <circle cx="949" cy="795.500" r="3.700" fill="#fff" stroke="#8a7ba0" stroke-width="1.500"/>
      <path d="M946 729l3 4 3-4M949 733v4.500" fill="none" stroke="#3cf53c" stroke-width="1.200"/>
      <path d="M1017.500 802l7 8M1024.500 802l-7 8" stroke="#f04a3a" stroke-width="1.200"/>
    </svg>

    <div class="cubebox">
      <div class="face"><span>RIGHT</span></div>
      <i class="ax"></i><i class="ay"></i><b class="lx">X</b><b class="ly">Y</b>
    </div>

    <aside class="browser">
      <div class="bar"><span class="chev"><svg viewBox="0 0 10 8" width="10" height="8"><path d="M4 1v6L1 4zM9 1v6L6 4z" fill="#777"/></svg></span><h2>BROWSER</h2><button aria-label="Collapse"><svg viewBox="0 0 10 10" width="10" height="10"><path d="M1 5h8" stroke="#777" stroke-width="2"/></svg></button></div>
      <ul class="tree">
        <li class="l0 open"><button class="exp" aria-label="Collapse"></button><div class="it w135"><svg><use href="#eye"/></svg><svg><use href="#comp"/></svg><span class="t">52265157 v3</span></div></li>
        <li class="l1"><span class="exp none"></span><div class="it w90"><svg><use href="#units"/></svg><span class="t">Units: in</span></div></li>
        <li class="l1"><button class="exp" aria-label="Expand"></button><div class="it w118"><svg><use href="#folder"/></svg><span class="t">Named Views</span></div></li>
        <li class="l1"><button class="exp" aria-label="Expand"></button><div class="it w104"><svg><use href="#eyeoff"/></svg><svg><use href="#folder"/></svg><span class="t">Origin</span></div></li>
        <li class="l1"><button class="exp" aria-label="Expand"></button><div class="it w107"><svg><use href="#eye"/></svg><svg><use href="#comp"/></svg><span class="t">Models</span></div></li>
        <li class="l1 open"><button class="exp" aria-label="Collapse"></button><div class="it w107 busy"><svg><use href="#eye"/></svg><svg><use href="#setupf"/></svg><span class="t">Setups</span></div></li>
        <li class="l2"><button class="exp" aria-label="Expand"></button><div class="it w323"><svg><use href="#eye"/></svg><svg><use href="#ok"/></svg><label class="pick" for="s1"><svg><use href="#setupf"/></svg><span class="t">[(0:09:59)] Setup1 [Work offset=Default]</span><span class="dots">...</span></label><input type="radio" name="setup" id="s1"></div></li>
        <li class="l2 cur"><button class="exp" aria-label="Expand"></button><div class="it w323"><svg><use href="#eye"/></svg><svg><use href="#ok"/></svg><label class="pick" for="s3"><svg><use href="#setupf"/></svg><span class="t">[(0:00:35)] Setup3 [Work offset=Defau...</span></label><input type="radio" name="setup" id="s3" checked></div></li>
        <li class="l2"><button class="exp" aria-label="Expand"></button><div class="it w323"><svg><use href="#eye"/></svg><svg><use href="#ok"/></svg><label class="pick" for="s5"><svg><use href="#setupf"/></svg><span class="t">[(0:02:01)] Setup5 [Work offset=Default]</span><span class="dots">...</span></label><input type="radio" name="setup" id="s5"></div></li>
        <li class="l2"><button class="exp" aria-label="Expand"></button><div class="it w323"><svg><use href="#eye"/></svg><svg><use href="#ok"/></svg><label class="pick" for="s6"><svg><use href="#setupf"/></svg><span class="t">[(0:00:34)] Setup6 [Work offset=Default]</span><span class="dots">...</span></label><input type="radio" name="setup" id="s6"></div></li>
        <li class="l2"><button class="exp" aria-label="Expand"></button><div class="it w323"><svg><use href="#eye"/></svg><svg><use href="#ok"/></svg><label class="pick" for="s8"><svg><use href="#setupf"/></svg><span class="t">[(0:06:52)] Setup8 [Work offset=Default]</span><span class="dots">...</span></label><input type="radio" name="setup" id="s8"></div></li>
        <li class="l2 open"><button class="exp" aria-label="Collapse"></button><div class="it w323"><svg><use href="#eye"/></svg><svg><use href="#ok"/></svg><label class="pick" for="s9"><svg><use href="#setupf"/></svg><span class="t">[(0:08:48)] Setup9 [Work offset=Default]</span><span class="dots">...</span></label><input type="radio" name="setup" id="s9"></div></li>
        <li class="l3"><button class="exp" aria-label="Expand"></button><div class="it w288"><svg><use href="#eyeoff"/></svg><svg><use href="#ok"/></svg><svg><use href="#flow"/></svg><span class="t">[T18 (0:05:23)] Flow1 (3) (.125 Ball)</span></div></li>
        <li class="l3"><button class="exp" aria-label="Expand"></button><div class="it w296"><svg><use href="#eyeoff"/></svg><svg><use href="#ok"/></svg><svg><use href="#contour"/></svg><span class="t">[T8 (0:02:28)] 2D Contour7 (.125 em)</span></div></li>
        <li class="l3"><button class="exp" aria-label="Expand"></button><div class="it w308"><svg><use href="#eyeoff"/></svg><svg><use href="#ok"/></svg><svg><use href="#contour"/></svg><span class="t">[T8 (0:00:41)] 2D Contour7 (2) (.125 em)</span><span class="dots">...</span></div></li>
      </ul>
    </aside>

    <footer class="foot">
      <div class="bar comments"><h2>COMMENTS</h2><button aria-label="Add comment"><svg viewBox="0 0 10 10" width="10" height="10"><path d="M5 1v8M1 5h8" stroke="#666" stroke-width="2"/></svg></button></div>
      <div class="navbar">
        <button class="w" aria-label="Orbit"><svg viewBox="0 0 18 18"><ellipse cx="9" cy="9" rx="8" ry="3.500" fill="none" stroke="#444" stroke-width="1.100"/><ellipse cx="9" cy="9" rx="3.500" ry="8" fill="none" stroke="#444" stroke-width="1.100"/><path d="M6 6h6v6H6z" fill="#f4f4f4"/><path d="M7.500 7.500h3.500V11H7.500z" fill="#3fa0ec"/></svg><svg class="car"><use href="#caret"/></svg></button>
        <button aria-label="Look at"><svg viewBox="0 0 18 18"><path d="M2 7L7 2v3h9v3" fill="#999" stroke="#555"/><path d="M1.500 6.500h15v10h-15z" fill="#ddd" stroke="#666"/><path d="M3 9h12v6H3z" fill="#62b0ea"/></svg></button>
        <button aria-label="Pan"><svg viewBox="0 0 18 18"><path d="M6 17Q5 13 1 9q1-2 4 1L3 4q1-2 2.500 1L8 9V2q1.500-2 2 0v7l2-6q2-1 1.500 1L12 10l3-3q2 0 1 2l-4 8z" fill="#fff" stroke="#888"/></svg></button>
        <button aria-label="Zoom"><svg viewBox="0 0 18 18"><circle cx="6.500" cy="8.500" r="5" fill="#ddd" stroke="#777"/><path d="M10 12l4 5" stroke="#a87a4c" stroke-width="2"/><path d="M12 4h6M15 1v6M12 8.500h6" stroke="#555"/></svg></button>
        <button class="w" aria-label="Fit"><svg viewBox="0 0 18 18"><path d="M.5.5h17v17H.5z" fill="none" stroke="#444" stroke-dasharray="2 1"/><circle cx="8.500" cy="8" r="6.500" fill="#ddd" stroke="#777"/><path d="M13 13l4 5" stroke="#a87a4c" stroke-width="2"/></svg><svg class="car"><use href="#caret"/></svg></button>
        <button class="w2" aria-label="Display settings"><svg viewBox="0 0 18 18"><path d="M1.500 3.500h15v10h-15z" fill="#ddd" stroke="#666"/><path d="M4 6h10v5H4z" fill="#aaa"/><path d="M9 14v2M5 16.500h8" stroke="#666" stroke-width="1.500"/></svg><svg class="car"><use href="#caret"/></svg></button>
        <button class="w2" aria-label="Grid"><svg viewBox="0 0 18 18"><path d="M2.500 2.500h13v13h-13zM2.500 7h13M2.500 11h13M7 2.500v13M11 2.500v13" fill="#fff" stroke="#777" stroke-width="1.300"/></svg><svg class="car"><use href="#caret"/></svg></button>
        <button class="w2" aria-label="Viewports"><svg viewBox="0 0 18 18"><path d="M2 6l4-4h10v10l-4 4M12 6l4-4M12 6v10" fill="#eee" stroke="#444"/><path d="M1.500 6.500h10v10h-10z" fill="#a9c9ec" stroke="#333"/><circle cx="5.500" cy="12" r="2" fill="#fff" stroke="#333"/><circle cx="8" cy="10" r="2" fill="none" stroke="#333"/></svg><svg class="car"><use href="#caret"/></svg></button>
        <button class="w2" aria-label="Toolpath"><svg viewBox="0 0 18 18"><path d="M4 3h11v13H4z" fill="#a9cbf0" stroke="#6f8fb5"/><path d="M1 7h16M1 10h16M1 13h16" stroke="#173f78" stroke-width="1.400"/></svg><svg class="car"><use href="#caret"/></svg></button>
        <button class="w2" aria-label="Regenerate"><svg viewBox="0 0 18 18"><path d="M2 8q1-6 7-6 4 0 6 3M16 10q-1 6-7 6-4 0-6-3" fill="none" stroke="#2f74d0" stroke-width="1.700"/><path d="M16 1v5h-5zM2 17v-5h5z" fill="#2a4780"/></svg><svg class="car"><use href="#caret"/></svg></button>
        <button class="w2" aria-label="Stock"><svg viewBox="0 0 18 18"><path d="M9 0l9 9-9 9-9-9z" fill="#4b9fdf"/><path d="M9 0l6 6-6 4-6-4z" fill="#9bd0f5"/><path d="M3 6l6 4 6-4M1.500 8.500L9 13l7.500-4.500" fill="none" stroke="#2d7cba" stroke-width=".8"/></svg><svg class="car"><use href="#caret"/></svg></button>
        <button class="w2" aria-label="Machine"><svg viewBox="0 0 18 18"><path d="M1 4h16v10H1z" fill="#ccc" stroke="#666"/><path d="M0 14h18v2H0z" fill="#24588a"/><path d="M5 5h7v8H5z" fill="#9fc6ef" stroke="#3d78ad"/><path d="M7 7h3v3H7z" fill="#fff"/><path d="M14 9h2v2h-2z" fill="#d33"/></svg><svg class="car"><use href="#caret"/></svg></button>
        <button class="w2" aria-label="Tool"><svg viewBox="0 0 18 18"><path d="M3 1h12v5H3z" fill="#ccc" stroke="#888"/><path d="M6.500 6h5v9l-2 2-3-2z" fill="#ccc" stroke="#777"/><path d="M6 11l6-3M6 15l6-3" stroke="#777" stroke-width="1.500"/></svg><svg class="car"><use href="#caret"/></svg></button>
        <button class="w2" aria-label="Fixture"><svg viewBox="0 0 18 18"><path d="M0 3h4v1h3V3h7l4 3v3h-3l-2-1h-3q-2 1 0 3h3l2-1h3v3l-4 3H7v-1H4v1H0v-3h1V6H0z" fill="#5aa9e6" stroke="#2f6fa5" stroke-width=".8"/></svg><svg class="car"><use href="#caret"/></svg></button>
      </div>
      <div class="status"><span>Setup3 | Total machining time: 0:00:35</span><button aria-label="Assistant"><svg viewBox="0 0 16 16"><path d="M8 .5A7.500 7.500 0 0 1 15.500 8v7.500H8A7.500 7.500 0 0 1 8 .5z" fill="#000"/><path d="M3 10l5-4v2l3-3v4M5 11l7-5" stroke="#fff" stroke-width=".9" fill="none"/></svg></button></div>
    </footer>
  </main>

  <footer class="taskbar">
    <button class="start" aria-label="Start"><svg viewBox="0 0 24 24" width="24" height="24" fill="url(#gBlue)"><path d="M0 0h11.500v11.500H0zM12.500 0H24v11.500H12.500zM0 12.500h11.500V24H0zM12.500 12.500H24V24H12.500z"/></svg></button>
    <div class="search">
      <svg viewBox="0 0 16 16" width="16" height="16"><circle cx="7" cy="6.500" r="5.500" fill="none" stroke="#222" stroke-width="1.500"/><path d="M11 10.500l4 4.500" stroke="#222" stroke-width="1.600"/></svg>
      <input type="text" placeholder="Search" aria-label="Search">
      <svg viewBox="0 0 44 28" width="44" height="28"><circle cx="22" cy="12" r="11.500" fill="#f7c352"/><path d="M22 .5a11.500 11.500 0 0 1 9 19q2-12-9-19z" fill="#fbdb87"/><circle cx="18" cy="9" r="1.500" fill="#e9b04a"/><circle cx="25" cy="13" r="2" fill="#e9b04a"/><path d="M0 26l2-8 2 3 1-5 2 5 1-6 2 6 2-2 2 5q8 3 14-2l1-4 2 3 2-7 2 6 2-8 2 8 2-3 2 9z" fill="#1b2c5c"/><path d="M3 27q6-4 16-3 10-2 19 3z" fill="#4a3c74"/><path d="M13 25q8-3 15 0l-6 2.500z" fill="#f3a58c"/></svg>
    </div>
    <button aria-label="Copilot"><svg viewBox="0 0 24 24"><use href="#cp"/></svg></button>
    <button aria-label="File Explorer"><svg viewBox="0 0 24 24"><path d="M0 3q0-1.500 1.500-1.500h7L11 4h11q2 0 2 2v4H0z" fill="#d99a0b"/><path d="M0 6h24v15q0 2-2 2H2q-2 0-2-2z" fill="url(#gFolder)"/><path d="M4 23v-5q0-2 2-2h11q2 0 2 2v5z" fill="#1673c4"/><path d="M8 19h7" stroke="#0b4c8f"/></svg></button>
    <button aria-label="Store"><svg viewBox="0 0 24 24"><path d="M7 6V2q0-1 1-1h8q1 0 1 1v4" fill="none" stroke="#33b1e8" stroke-width="2"/><path d="M1 5h22v15q0 3-3 3H4q-3 0-3-3z" fill="#123f6e"/><path d="M1 5h22v6H1z" fill="#0e5a99"/><path d="M7.500 9h4v4h-4z" fill="#f25022"/><path d="M12.500 9h4v4h-4z" fill="#7fba00"/><path d="M7.500 14h4v4h-4z" fill="#00a4ef"/><path d="M12.500 14h4v4h-4z" fill="#ffb900"/></svg></button>
    <button aria-label="Outlook"><svg viewBox="0 0 24 24"><path d="M2 10L11 1.500q2-1 4 0L24 10v11q0 2-2 2H6z" fill="#1678e2"/><path d="M6 8l9 6 9-4v11q0 2-2 2H8z" fill="#48b8f8"/><path d="M3 9l9-7 11 8-9 6z" fill="#1b5fcc"/><path d="M8 23q9-5 16-11v9q0 2-2 2z" fill="#7ad4ff"/><rect y="11" width="11" height="11" rx="2" fill="#0f4fb4"/><circle cx="5.500" cy="16.500" r="2.700" fill="none" stroke="#fff" stroke-width="1.500"/></svg></button>
    <button aria-label="Calculator"><svg viewBox="0 0 24 24"><rect x="3" width="18" height="24" rx="1.500" fill="#5c6b7a"/><path d="M5 2h14v5H5z" fill="#4bc4ea"/><path d="M5 9h4v3.500H5zM10 9h4v3.500h-4zM15 9h4v3.500h-4zM5 14h4v3.500H5zM10 14h4v3.500h-4zM5 19h4v3H5zM10 19h4v3h-4z" fill="#e2e6ea"/><path d="M15 14h4v8h-4z" fill="#114b8a"/></svg></button>
    <button aria-label="Edge" class="run"><svg viewBox="0 0 24 24"><circle cx="12" cy="12" r="12" fill="url(#gEdge)"/><path d="M0 11Q2 0 12 0t12 10q0 6-7 6-4 0-4-2 2-1 1-4-2-4-7-3T0 11z" fill="url(#gEdgeTop)"/><path d="M9 10q-5 8 2 12 7 2 11-4-8 3-11-1-3-3-2-7z" fill="#0e4c95"/><path d="M13 13q1 5 10 2l-1.500 3.500Q14 20 12 16z" fill="#e3edf8"/></svg></button>
    <button aria-label="Microsoft 365"><svg viewBox="0 0 24 24"><g id="cp"><path d="M8 1h8q2 0 3 4l1 3h-5q-2 0-3 3l-3 9q-1 2-3 2H3q-4-1-2-7L4 5q1-4 4-4z" fill="url(#gCopC)"/><path d="M8 1h8q2 0 3 4l1 3h-6L12 3q-1-2-4-2z" fill="#1c4fc0"/><path d="M16 7h4q5 1 3 8l-2 5q-1 3-5 3H8q3 0 4-3l3-11q.5-2 1-2z" fill="url(#gCopB)"/><path d="M5 18h5l2 5H8q-2 0-3-5z" fill="#f2603c"/></g></svg><span class="badge">M365</span></button>
    <button aria-label="Teams"><svg viewBox="0 0 24 24"><circle cx="14" cy="4.500" r="3.700" fill="#7b83eb"/><circle cx="21" cy="5.500" r="2.700" fill="#5059c9"/><path d="M17 9h7v7q0 4-4 4-2 0-3-1z" fill="#5059c9"/><path d="M7 9h12v9q0 5-6 5-6 0-6-6z" fill="#7b83eb"/><rect y="6" width="12" height="12" rx="1.500" fill="#4b53bc"/><path d="M3 9.500h6M6 9.500V15" stroke="#fff" stroke-width="1.700"/></svg></button>
    <button aria-label="Autodesk Fusion" class="cur"><svg viewBox="0 0 26 26"><use href="#fusion"/></svg><span class="fus">FUS</span></button>
    <div class="tray">
      <button aria-label="Show hidden icons"><svg viewBox="0 0 12 12" width="12" height="12"><path d="M1 8.500L6 3.500l5 5" fill="none" stroke="#222" stroke-width="1.400"/></svg></button>
      <button aria-label="Updates" class="upd"><svg viewBox="0 0 18 18" width="18" height="18"><path d="M2 9q0-6 7-7 4 0 6 4M15 1.500V6h-4M2 17v-4h4M2.500 13.500L6 17" fill="none" stroke="#222" stroke-width="1.300"/><circle cx="13" cy="13.500" r="4" fill="#f7930f"/></svg></button>
      <button aria-label="Network"><svg viewBox="0 0 16 14" width="16" height="14" fill="none" stroke="#222" stroke-width="1.200"><path d="M.5 5.500Q8-2 15.500 5.500M2.800 8Q8 2.500 13.200 8M5 10.300q3-3 6 0"/><circle cx="8" cy="12" r="1" fill="#222"/></svg></button>
      <button aria-label="Volume"><svg viewBox="0 0 16 14" width="16" height="14" fill="none" stroke="#222" stroke-width="1.200"><path d="M1 5h2.500L7 1.500v11L3.500 9H1zM9.500 5q1.500 2 0 4M11.500 3q3 4 0 8M13.500 1.500q4.500 5.500 0 11"/></svg></button>
      <div class="clock"><time>10:42 AM</time><time>12/4/2025</time></div>
    </div>
  </footer>
</div>
</body>
</html>
```
FILE: styles.css
```css
* { box-sizing: border-box; }
body { margin: 0; font-family: "Liberation Sans", Arial, sans-serif; color: #333; }
button { border: 0; background: none; padding: 0; margin: 0; font: inherit; color: inherit; display: flex; align-items: center; justify-content: center; }
h1, h2, ul { margin: 0; padding: 0; font-weight: 400; }
svg { display: block; flex: none; }
.defs { position: absolute; width: 0; height: 0; }
.car { width: 8px; height: 6px; }
.app { display: flex; flex-direction: column; height: 100vh; overflow: hidden; }

/* Title bar */
.title { flex: none; height: 23px; display: flex; align-items: center; gap: 6px; padding-left: 3px; background: #eef3fb; }
.logo { width: 15px; height: 16px; }
.title h1 { flex: 1; font: 12px "Open Sans", sans-serif; color: #111; }
.winbtns { display: flex; }
.winbtns button { width: 46px; height: 20px; }
.winbtns svg { width: 12px; height: 12px; }
.winbtns button:last-child { margin-right: 2px; }

/* Document tabs */
.docbar { flex: none; height: 32px; display: flex; background: #d9d9d9; }
.quick { width: 231px; display: flex; align-items: center; padding-left: 7px; }
.quick .q2 { margin-left: 16px; gap: 5px; width: 30px; }
.quick .q2.dim { margin-left: 7px; opacity: .6; }
.quick .q3 { margin-left: 12px; }
.quick .q4 { margin-left: 16px; padding-top: 6px; }
.docs { flex: 1; display: flex; }
.doc { flex: 1; display: flex; align-items: center; padding: 1px 5px 0 0; margin-top: 4px; height: 28px; }
.doc.on { background: #f5f5f5; border-radius: 0 4px 0 0; }
.doc .name { flex: 1; gap: 5px; font-size: 12px; padding-left: 4px; }
.doc .name svg { width: 14px; height: 16px; }
.doc .x { width: 16px; height: 16px; }
.doc .x svg { width: 10px; height: 10px; }
.tools { width: 235px; display: flex; align-items: center; padding-left: 10px; }
.tools button { width: 33px; }
.tools button:first-child { width: 32px; margin-right: 10px; }
.tools svg { width: 14px; height: 14px; }
.tools .acct { width: 50px; }
.tools .acct svg { width: 24px; height: 24px; }

/* Ribbon */
.ribbon { flex: none; height: 85px; display: flex; background: #f5f5f5; font: 11px Roboto, sans-serif; }
.workspace { width: 112px; height: 62px; margin: 10px 3px 0 11px; border: 2px solid #d6d6d6; border-radius: 5px; font-weight: 700; gap: 7px; }
.panel { flex: 1; min-width: 0; }
.tabs { display: flex; height: 24px; }
.tabs button { padding: 0 25px 0 26px; position: relative; line-height: 23px; align-items: flex-start; }
.tabs .on { font-weight: 700; padding: 0 23px 0 25px; }
.tabs .on::after { content: ""; position: absolute; left: 12px; right: 10px; bottom: 0; height: 3px; background: #444; }
.groups { display: flex; padding-top: 3px; }
.group { height: 51px; padding: 0 11px; border-right: 2px solid #ddd; display: flex; flex-direction: column; align-items: center; justify-content: space-between; margin-right: -2px; }
.icons { display: flex; gap: 11px; height: 32px; align-items: center; }
.icons svg { width: 32px; height: 32px; }
.group .lab { gap: 4px; line-height: 14px; height: 11px; white-space: nowrap; }
.multi { width: 104px; }
.insp { width: 85px; }
.sel { width: 78px; border-right: 0; }
.icons .active { width: 40px; height: 39px; flex: none; background: #deeef7; border: 2px solid #aad7ee; border-radius: 2px; }
.active svg { margin: -4px 0 0 -2px; }
.g12 { font: 700 11px "Liberation Mono", monospace; fill: #1787e0; text-anchor: middle; }

/* Canvas */
.canvas { flex: 1; min-height: 0; position: relative; display: flex; flex-direction: column; justify-content: space-between; background: #fff; }
.scene { position: absolute; left: 0; top: 0; width: 100%; height: 100%; }
.minor { stroke: #000; stroke-opacity: .07; stroke-width: 1.3; }
.major { stroke: #000; stroke-opacity: .2; stroke-width: 1.3; }
.bar { width: 399px; height: 25px; display: flex; align-items: center; background: #f5f5f5; border: 1px solid #ddd; margin-left: 4px; padding: 0 11px 0 5px; }
.bar h2 { flex: 1; font: 12px "Open Sans", sans-serif; }
.bar .chev { width: 22px; }
.comments { padding-left: 27px; }
.browser { position: relative; padding-top: 4px; align-self: flex-start; }
.tree { list-style: none; font-size: 11px; padding-top: 3px; }
.tree li { display: flex; align-items: center; height: 24px; }
.l0 { padding-left: 12px; }
.l1 { padding-left: 30px; }
.l2 { padding-left: 48px; }
.l3 { padding-left: 66px; }
.exp { width: 28px; height: 20px; padding-right: 4px; }
.exp::before { content: ""; width: 6px; height: 6px; border: solid #444; border-width: 1px 1px 0 0; transform: rotate(45deg); }
.open .exp { padding: 0 0 4px; }
.open .exp::before { transform: rotate(135deg); }
.exp.none::before { content: none; }
.it { height: 20px; display: flex; align-items: center; gap: 9px; padding-left: 3px; background: #f5f5f5; position: relative; }
.it svg { width: 16px; height: 16px; }
.it .t { margin-left: 5px; white-space: nowrap; }
.dots { margin-left: auto; padding-right: 10px; }
.pick { width: 250px; height: 20px; margin-left: -4px; padding-left: 4px; display: flex; align-items: center; gap: 9px; }
.cur .pick { height: 22px; background: #deeef7; border: 1px solid #4aa8dc; border-right: 0; padding-left: 3px; font-weight: 700; }
.pick .dots { margin-left: -3px; padding: 0; }
.it input { appearance: none; width: 13px; height: 13px; margin: 0 0 0 -6px; border: 1px solid #333; border-radius: 50%; background: #fff; }
.it input:checked { background: radial-gradient(circle, #222 0 2px, #fff 3px); }
.w90 { width: 90px; }
.w104 { width: 104px; }
.w107 { width: 107px; }
.w118 { width: 118px; }
.w135 { width: 135px; }
.w288 { width: 288px; }
.w296 { width: 296px; }
.w308 { width: 308px; }
.w323 { width: 323px; }
.busy::after { content: ""; position: absolute; left: 25px; right: 0; bottom: 1px; height: 3px; background: repeating-linear-gradient(120deg, #1b9ad6 0 3px, transparent 3px 6px); }

/* View cube */
.cubebox { position: absolute; right: 37px; top: 37px; width: 53px; height: 53px; }
.face { width: 53px; height: 53px; border: 1px solid #888; background: linear-gradient(#d8d8d8, #efefef); display: flex; align-items: center; justify-content: center; box-shadow: 0 -4px 4px -2px #aaa; }
.face span { font: 700 12px/34px Roboto, sans-serif; color: #999da3; background: #d9dbde; transform: rotate(180deg); }
.ax { position: absolute; left: 0; top: -1px; width: 62px; height: 2px; background: #f04040; }
.ay { position: absolute; left: -1px; top: 0; width: 2px; height: 62px; background: #44e044; }
.lx, .ly { position: absolute; font: 13px Roboto, sans-serif; }
.lx { left: 65px; top: -8px; color: #ff8080; }
.ly { left: -5px; top: 62px; color: #90f890; }

/* Canvas footer */
.foot { position: relative; display: grid; grid-template-columns: 1fr auto 1fr; align-items: center; height: 30px; margin-bottom: 1px; }
.navbar { display: flex; align-items: center; height: 24px; margin-bottom: 6px; background: #f4f4f4; padding: 0 0 0 3px; }
.navbar button { width: 26px; justify-content: flex-start; }
.navbar svg { width: 17px; height: 17px; }
.navbar .car { width: 8px; height: 6px; }
.navbar .w { width: 34px; gap: 4px; }
.navbar .w2 { width: 31px; gap: 2px; }
.navbar .w2:last-child { width: 28px; }
.status { display: flex; justify-content: flex-end; align-items: center; gap: 33px; padding-right: 12px; font: 700 11px "Liberation Sans", sans-serif; }
.status svg { width: 16px; height: 16px; }

/* Taskbar */
.taskbar { flex: none; height: 48px; display: flex; align-items: center; padding: 0 0 2px 20px; border-top: 1px solid #a9b5c4; background: linear-gradient(90deg, #e2edf6 0, #dfe9f7 20%, #cfdffb 38%, #d3dcf6 50%, #dcd7e8 58%, #dde6f4 72%, #dfecf9 85%, #e1edf9); }
.start { width: 24px; margin-right: 14px; }
.search { width: 218px; height: 31px; display: flex; align-items: center; gap: 10px; padding: 0 4px 0 10px; margin-right: 3px; border: 1px solid #cfd9e4; border-radius: 16px; background: #f7fafd; }
.search input { flex: 1; min-width: 0; border: 0; padding: 0; background: none; font: 13px "Open Sans", sans-serif; }
.search input::placeholder { color: #555; opacity: 1; }
.taskbar > button:not(.start) { width: 40px; height: 38px; margin: 0 2px; position: relative; }
.taskbar > button:not(.start) svg { width: 24px; height: 24px; }
.taskbar > .cur { background: #f2f4fb; border-radius: 4px; }
.run::after, .taskbar > .cur::after { content: ""; position: absolute; bottom: 0; left: 17px; width: 6px; height: 3px; border-radius: 2px; background: #777; }
.taskbar > .cur::after { left: 12px; width: 16px; background: #0b6fd0; }
.badge { position: absolute; left: 13px; bottom: 7px; background: #000; color: #fff; font: 700 8px/8px Roboto, sans-serif; }
.fus { position: absolute; left: 14px; bottom: 8px; color: #fff; font: 700 5px/5px Roboto, sans-serif; }
.tray { margin-left: auto; display: flex; align-items: center; padding-right: 19px; }
.tray .upd { margin: 0 14px 0 17px; }
.tray button + button:not(.upd) { margin-right: 8px; }
.clock { display: flex; flex-direction: column; text-align: right; width: 64px; font: 12px/16px "Open Sans", sans-serif; color: #222; }
```
